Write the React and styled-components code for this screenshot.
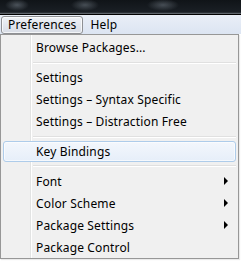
import React from "react";
import styled, { createGlobalStyle } from "styled-components";

const Global = createGlobalStyle`
  html, body {
    margin: 0;
    padding: 0;
    background: #ffffff;
  }
  body {
    width: 241px;
    height: 262px;
    overflow: hidden;
    font-family: "Noto Sans", "DejaVu Sans", sans-serif;
    font-size: 12px;
    letter-spacing: 0.15px;
    color: #000;
  }
`;

const Screen = styled.div`
  width: 241px;
  height: 262px;
  display: flex;
  flex-direction: column;
  background: #ffffff;
`;

const TitleStrip = styled.div`
  height: 13px;
  flex: none;
  background:
    radial-gradient(ellipse 12px 6px at 17px 5px, rgba(120, 130, 140, 0.55), transparent),
    radial-gradient(ellipse 14px 6px at 85px 5px, rgba(120, 130, 140, 0.5), transparent),
    radial-gradient(ellipse 16px 6px at 163px 5px, rgba(120, 130, 140, 0.5), transparent),
    linear-gradient(#101418, #1b2026);
  border-bottom: 1px solid #5e646b;
  box-shadow: inset 0 -1px 0 #2a2f35;
`;

const MenuBar = styled.div`
  height: 19px;
  flex: none;
  display: flex;
  align-items: center;
  padding-left: 1px;
  border-top: 1px solid #000;
  background: linear-gradient(#e9eef7, #dce5f2);
`;

const BarItem = styled.div`
  height: 16px;
  display: flex;
  align-items: center;
  padding: 0 6px 0 6px;
  border: 1px solid ${(p) => (p.open ? "#8e9094" : "transparent")};
  border-radius: 3px;
  background: ${(p) => (p.open ? "linear-gradient(#eef1f6, #d7dce5)" : "transparent")};
  box-shadow: ${(p) => (p.open ? "inset 0 0 0 1px rgba(255,255,255,0.7)" : "none")};
  line-height: 1;
`;

const Popup = styled.div`
  position: relative;
  width: 239px;
  height: 225px;
  flex: none;
  box-sizing: border-box;
  border: 1px solid #979797;
  background: #f0f0f0;
  padding: 2px 2px 0 2px;
  display: flex;
  flex-direction: column;
  box-shadow: 1px 1px 1px rgba(0, 0, 0, 0.08);
`;

const Gutter = styled.div`
  position: absolute;
  top: 0;
  bottom: 0;
  left: 29px;
  width: 2px;
  background: linear-gradient(90deg, #e2e3e3 50%, #ffffff 50%);
`;

const Item = styled.div`
  position: relative;
  height: 22px;
  box-sizing: border-box;
  display: flex;
  align-items: center;
  padding-left: 32px;
  padding-right: 7px;
  border: 1px solid ${(p) => (p.active ? "#aeccea" : "transparent")};
  border-radius: 3px;
  background: ${(p) =>
    p.active ? "linear-gradient(#f3f7fc, #e6eef9)" : "transparent"};
  box-shadow: ${(p) => (p.active ? "inset 0 0 0 1px rgba(255,255,255,0.6)" : "none")};
  z-index: 1;
`;

const Label = styled.span`
  flex: 1;
  white-space: nowrap;
`;

const Arrow = styled.span`
  width: 0;
  height: 0;
  border-top: 4px solid transparent;
  border-bottom: 4px solid transparent;
  border-left: 4px solid #000;
`;

const Separator = styled.div`
  height: 8px;
  flex: none;
  display: flex;
  align-items: center;
  padding-left: 30px;
  z-index: 1;
  &::after {
    content: "";
    flex: 1;
    height: 0;
    border-top: 1px solid #e0e0e0;
    border-bottom: 1px solid #ffffff;
  }
`;

const items = [
  { label: "Browse Packages..." },
  { sep: true },
  { label: "Settings" },
  { label: "Settings \u2013 Syntax Specific" },
  { label: "Settings \u2013 Distraction Free" },
  { sep: true },
  { label: "Key Bindings", active: true },
  { sep: true },
  { label: "Font", sub: true },
  { label: "Color Scheme", sub: true },
  { label: "Package Settings", sub: true },
  { label: "Package Control" },
];

export default function App() {
  return (
    <Screen>
      <Global />
      <TitleStrip />
      <MenuBar>
        <BarItem open>Preferences</BarItem>
        <BarItem>Help</BarItem>
      </MenuBar>
      <Popup>
        <Gutter />
        {items.map((it, i) =>
          it.sep ? (
            <Separator key={i} />
          ) : (
            <Item key={i} active={it.active}>
              <Label>{it.label}</Label>
              {it.sub && <Arrow />}
            </Item>
          )
        )}
      </Popup>
    </Screen>
  );
}
